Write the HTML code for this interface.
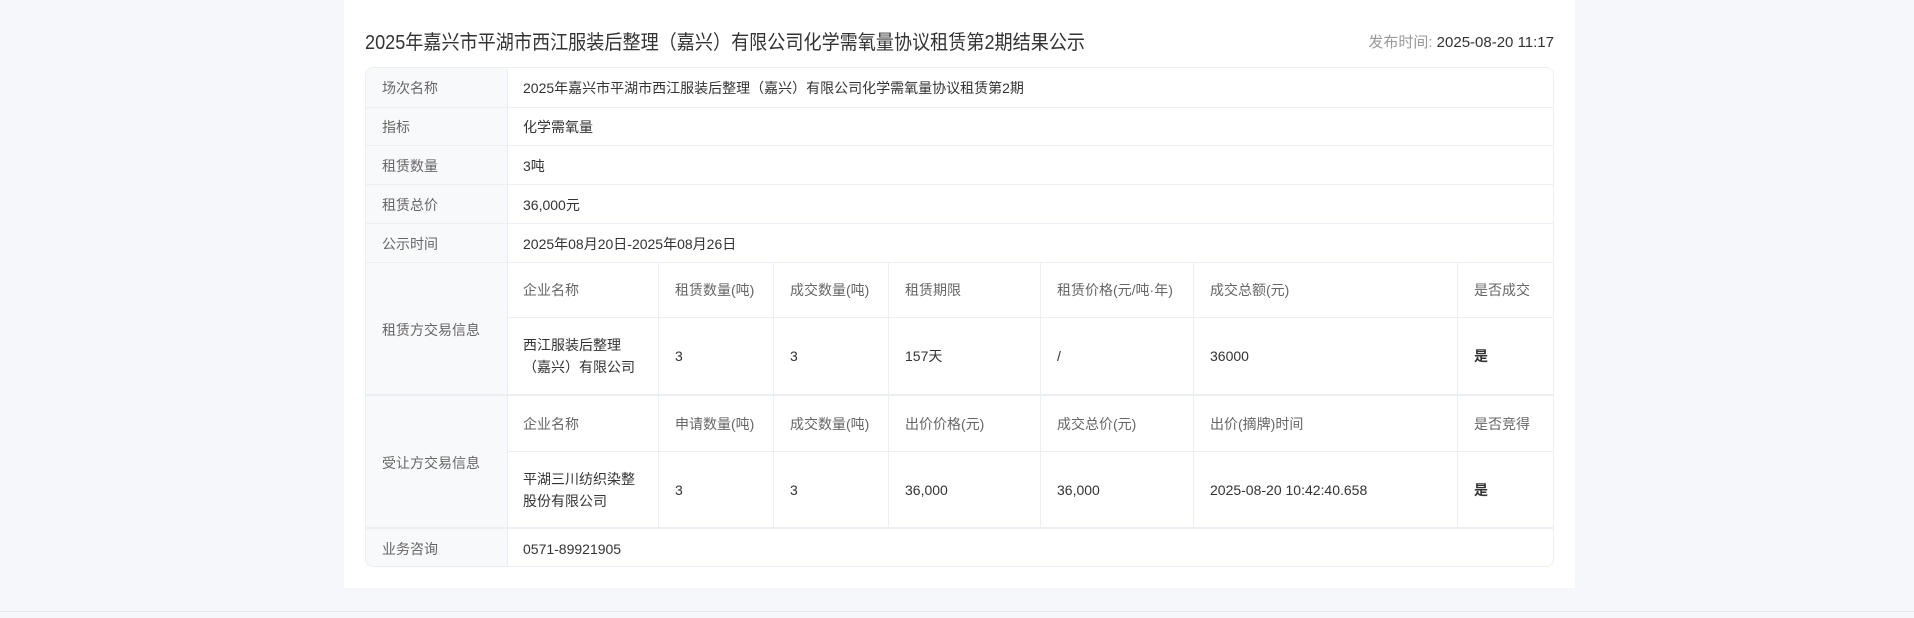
<!DOCTYPE html>
<html><head><meta charset="utf-8"><style>
*{margin:0;padding:0;box-sizing:border-box}
html,body{width:1914px;height:618px;overflow:hidden;background:#f5f7fa;font-family:"Liberation Sans","Noto Sans CJK SC",sans-serif}
.card{position:absolute;left:344px;top:0;width:1231px;height:588px;background:#fff}
.foot{position:absolute;left:0;top:611px;width:1914px;height:1px;background:#e4e7ed}
.title{position:absolute;left:365px;top:30px;font-size:20px;color:#333;line-height:26px;white-space:nowrap;transform:scaleX(0.905);transform-origin:left center}
.pub{position:absolute;right:360px;top:33px;font-size:15px;color:#333;line-height:20px;white-space:nowrap}
.pub span{color:#999}
.tbl{position:absolute;left:365px;top:67px;width:1189px;height:500px;border:1px solid #ebeef5;border-radius:8px;overflow:hidden}
.c{position:absolute;font-size:14px;color:#333;display:flex;align-items:center;line-height:22px;white-space:nowrap}
.lab{background:#f8f9fb;color:#666}
.h{color:#666}
.hl{position:absolute;height:1px;background:#ebeef5}
.vl{position:absolute;width:1px;background:#ebeef5}
b{font-weight:bold}
</style></head><body>
<div class="card"></div>
<div class="foot"></div>
<div class="title">2025年嘉兴市平湖市西江服装后整理（嘉兴）有限公司化学需氧量协议租赁第2期结果公示</div>
<div class="pub"><span>发布时间:</span> 2025-08-20 11:17</div>
<div class="tbl">
<div class="c lab" style="left:0;top:0;width:141px;height:500px"></div>
<div class="c lab" style="left:16px;top:0;height:40px">场次名称</div>
<div class="c lab" style="left:16px;top:40px;height:38px">指标</div>
<div class="c lab" style="left:16px;top:78px;height:39px">租赁数量</div>
<div class="c lab" style="left:16px;top:117px;height:39px">租赁总价</div>
<div class="c lab" style="left:16px;top:156px;height:39px">公示时间</div>
<div class="c lab" style="left:16px;top:195px;height:133px">租赁方交易信息</div>
<div class="c lab" style="left:16px;top:328px;height:133px">受让方交易信息</div>
<div class="c lab" style="left:16px;top:461px;height:39px">业务咨询</div>

<div class="c" style="left:157px;top:0;height:40px">2025年嘉兴市平湖市西江服装后整理（嘉兴）有限公司化学需氧量协议租赁第2期</div>
<div class="c" style="left:157px;top:40px;height:38px">化学需氧量</div>
<div class="c" style="left:157px;top:78px;height:39px">3吨</div>
<div class="c" style="left:157px;top:117px;height:39px">36,000元</div>
<div class="c" style="left:157px;top:156px;height:39px">2025年08月20日-2025年08月26日</div>
<div class="c" style="left:157px;top:461px;height:39px">0571-89921905</div>

<div class="hl" style="left:0;width:1189px;top:39px"></div>
<div class="hl" style="left:0;width:1189px;top:77px"></div>
<div class="hl" style="left:0;width:1189px;top:116px"></div>
<div class="hl" style="left:0;width:1189px;top:155px"></div>
<div class="hl" style="left:0;width:1189px;top:194px"></div>
<div class="hl" style="left:141px;width:1048px;top:249px"></div>
<div class="hl" style="left:0;width:1189px;top:326px;height:2px"></div>
<div class="hl" style="left:141px;width:1048px;top:383px"></div>
<div class="hl" style="left:0;width:1189px;top:459px;height:2px"></div>
<div class="vl" style="left:141px;top:0;height:500px"></div>
<div class="vl" style="left:292px;top:195px;height:265px"></div>
<div class="vl" style="left:407px;top:195px;height:265px"></div>
<div class="vl" style="left:522px;top:195px;height:265px"></div>
<div class="vl" style="left:674px;top:195px;height:265px"></div>
<div class="vl" style="left:827px;top:195px;height:265px"></div>
<div class="vl" style="left:1091px;top:195px;height:265px"></div>
<div class="vl" style="left:1187px;top:195px;height:265px"></div>

<div class="c h" style="left:157px;top:195px;height:54px">企业名称</div>
<div class="c h" style="left:309px;top:195px;height:54px">租赁数量(吨)</div>
<div class="c h" style="left:424px;top:195px;height:54px">成交数量(吨)</div>
<div class="c h" style="left:539px;top:195px;height:54px">租赁期限</div>
<div class="c h" style="left:691px;top:195px;height:54px">租赁价格(元/吨·年)</div>
<div class="c h" style="left:844px;top:195px;height:54px">成交总额(元)</div>
<div class="c h" style="left:1108px;top:195px;height:54px">是否成交</div>
<div class="c" style="left:157px;top:250px;height:76px">西江服装后整理<br>（嘉兴）有限公司</div>
<div class="c" style="left:309px;top:250px;height:76px">3</div>
<div class="c" style="left:424px;top:250px;height:76px">3</div>
<div class="c" style="left:539px;top:250px;height:76px">157天</div>
<div class="c" style="left:691px;top:250px;height:76px">/</div>
<div class="c" style="left:844px;top:250px;height:76px">36000</div>
<div class="c" style="left:1108px;top:250px;height:76px"><b>是</b></div>

<div class="c h" style="left:157px;top:328px;height:55px">企业名称</div>
<div class="c h" style="left:309px;top:328px;height:55px">申请数量(吨)</div>
<div class="c h" style="left:424px;top:328px;height:55px">成交数量(吨)</div>
<div class="c h" style="left:539px;top:328px;height:55px">出价价格(元)</div>
<div class="c h" style="left:691px;top:328px;height:55px">成交总价(元)</div>
<div class="c h" style="left:844px;top:328px;height:55px">出价(摘牌)时间</div>
<div class="c h" style="left:1108px;top:328px;height:55px">是否竞得</div>
<div class="c" style="left:157px;top:384px;height:75px">平湖三川纺织染整<br>股份有限公司</div>
<div class="c" style="left:309px;top:384px;height:75px">3</div>
<div class="c" style="left:424px;top:384px;height:75px">3</div>
<div class="c" style="left:539px;top:384px;height:75px">36,000</div>
<div class="c" style="left:691px;top:384px;height:75px">36,000</div>
<div class="c" style="left:844px;top:384px;height:75px">2025-08-20 10:42:40.658</div>
<div class="c" style="left:1108px;top:384px;height:75px"><b>是</b></div>
</div>
</body></html>
